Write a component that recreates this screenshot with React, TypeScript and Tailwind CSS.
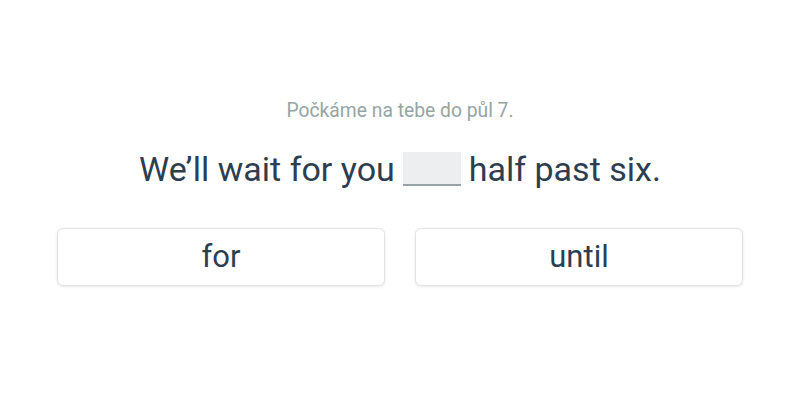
const options = ['for', 'until'];

export default function App() {
  return (
    <div className="flex h-[400px] w-[800px] flex-col items-center bg-white font-['Roboto',sans-serif]">
      {/* Hint (translation) */}
      <p className="mt-[99px] text-[19.3px] leading-[24px] text-[#95a5a6]">Počkáme na tebe do půl 7.</p>

      {/* Sentence with blank */}
      <div className="mt-[26px] flex items-center text-[34px] leading-[40px] text-[#2c3e50]">
        <span>We’ll wait for you</span>
        <span className="mx-[8px] h-[34px] w-[58px] border-b-2 border-[#95a5a6] bg-[#eceef0]" />
        <span>half past six.</span>
      </div>

      {/* Answer options */}
      <div className="mt-[39px] flex gap-[30px]">
        {options.map((o) => (
          <button
            key={o}
            className="h-[58px] w-[328px] rounded-[6px] border border-[#e3e3e3] bg-white text-[31px] text-[#2c3e50] shadow-[0_1px_3px_rgba(0,0,0,0.1)]"
          >
            {o}
          </button>
        ))}
      </div>
    </div>
  );
}
